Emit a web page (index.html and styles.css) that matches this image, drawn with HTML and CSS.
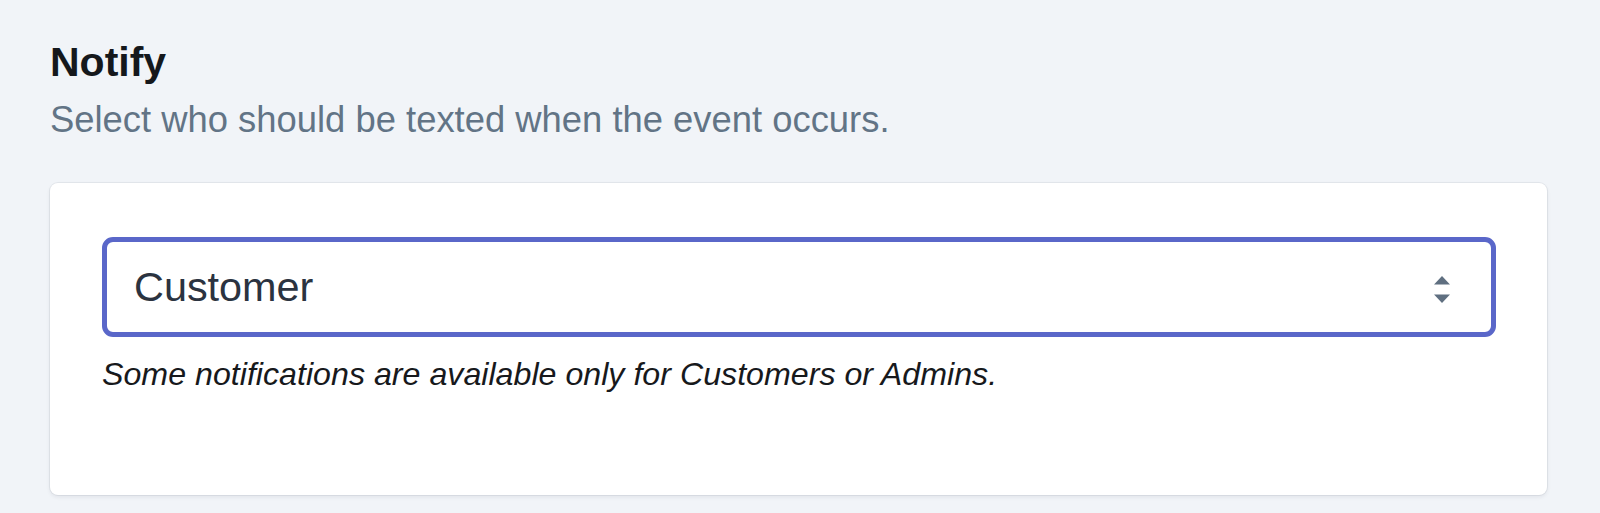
FILE: index.html
```html
<!DOCTYPE html>
<html lang="en">
<head>
<meta charset="utf-8">
<title>Notify</title>
<link rel="stylesheet" href="styles.css">
</head>
<body>
<main class="page">
  <h2 class="title">Notify</h2>
  <p class="subtitle">Select who should be texted when the event occurs.</p>
  <section class="card">
    <div class="select" role="combobox" aria-expanded="false">
      <span class="select-value">Customer</span>
      <svg class="select-icon" width="16" height="27" viewBox="0 0 16 27" aria-hidden="true">
        <polygon points="0,8.5 8,0 16,8.5" fill="#5f6f80"/>
        <polygon points="0,18.5 16,18.5 8,27" fill="#5f6f80"/>
      </svg>
    </div>
    <p class="hint">Some notifications are available only for Customers or Admins.</p>
  </section>
</main>
</body>
</html>
```
FILE: styles.css
```css
html, body {
  margin: 0;
  padding: 0;
  background: #f1f4f8;
}

body {
  font-family: "Liberation Sans", Arial, sans-serif;
  height: 513px;
  overflow: hidden;
}

.page {
  padding: 38px 53px 0 50px;
}

.title {
  margin: 0;
  font-size: 41px;
  line-height: 48px;
  font-weight: 700;
  color: #15181c;
}

.subtitle {
  margin: 12px 0 0 0;
  font-size: 36.4px;
  line-height: 44px;
  color: #627486;
}

.card {
  margin-top: 41px;
  background: #ffffff;
  border-radius: 8px;
  box-shadow: 0 0 0 1px rgba(20, 30, 50, 0.06), 0 2px 4px rgba(20, 30, 50, 0.08);
  padding: 54px 51px 101px 52px;
}

.select {
  box-sizing: border-box;
  height: 100px;
  border: 5px solid #5a67c9;
  border-radius: 11px;
  display: flex;
  align-items: center;
  justify-content: space-between;
  padding: 0 41px 0 27px;
}

.select-value {
  font-size: 41.4px;
  color: #2b3340;
}

.select-icon {
  display: block;
  margin-top: 5px;
}

.hint {
  margin: 17px 0 0 0;
  font-size: 32.2px;
  line-height: 40px;
  font-style: italic;
  color: #17191c;
}
```
